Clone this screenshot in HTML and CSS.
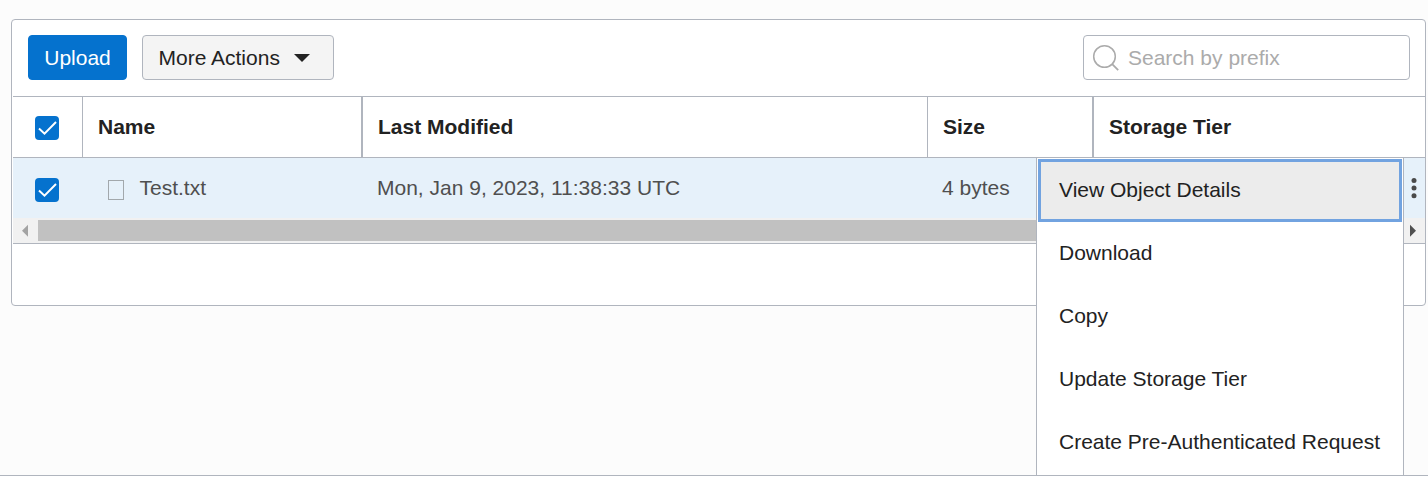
FILE: index.html
```html
<!DOCTYPE html>
<html lang="en">
<head>
<meta charset="utf-8">
<title>Objects</title>
<link rel="stylesheet" href="styles.css">
</head>
<body>
<main class="page">
  <section class="panel">
    <div class="toolbar">
      <button class="btn btn-primary">Upload</button>
      <button class="btn btn-menu">More Actions
        <svg class="caret" width="16" height="8" viewBox="0 0 16 8"><path d="M0 0h16L8 8z" fill="#222"/></svg>
      </button>
      <label class="search">
        <svg width="28" height="28" viewBox="0 0 28 28" fill="none" stroke="#ababab" stroke-width="1.5"><circle cx="12.5" cy="12.5" r="10.8"/><path d="M20.2 20.2l6 6" stroke-width="1.8"/></svg>
        <span>Search by prefix</span>
      </label>
    </div>
    <div class="table">
      <div class="row head">
        <div class="cell check"><svg class="box" viewBox="0 0 24 24"><rect width="24" height="24" rx="4" fill="#0572ce"/><path d="M4 12.5l5.5 5.2L21 6" fill="none" stroke="#fff" stroke-width="2"/></svg></div>
        <div class="cell name">Name</div>
        <div class="cell modified">Last Modified</div>
        <div class="cell size">Size</div>
        <div class="cell tier">Storage Tier</div>
      </div>
      <div class="row item">
        <div class="cell check"><svg class="box" viewBox="0 0 24 24"><rect width="24" height="24" rx="4" fill="#0572ce"/><path d="M4 12.5l5.5 5.2L21 6" fill="none" stroke="#fff" stroke-width="2"/></svg></div>
        <div class="cell name"><i class="file"></i>Test.txt</div>
        <div class="cell modified">Mon, Jan 9, 2023, 11:38:33 UTC</div>
        <div class="cell size">4 bytes</div>
        <div class="cell tier"></div>
        <svg class="kebab" width="14" height="60" viewBox="0 0 14 60" fill="#4a4a4a"><circle cx="3" cy="22.4" r="2.5"/><circle cx="3" cy="30" r="2.5"/><circle cx="3" cy="37.7" r="2.5"/></svg>
      </div>
      <div class="scrollbar">
        <svg class="arrow" width="25" height="25" viewBox="0 0 25 25"><path d="M15 6.8v12L9 12.8z" fill="#a3a3a3"/></svg>
        <div class="thumb"></div>
        <svg class="arrow" width="25" height="25" viewBox="0 0 25 25"><path d="M10 6.8v12l6-6z" fill="#505050"/></svg>
      </div>
    </div>
  </section>
  <nav class="menu">
    <a class="option active">View Object Details</a>
    <a class="option">Download</a>
    <a class="option">Copy</a>
    <a class="option">Update Storage Tier</a>
    <a class="option">Create Pre-Authenticated Request</a>
  </nav>
</main>
</body>
</html>
```
FILE: styles.css
```css
* { box-sizing: border-box; }
body {
  margin: 0;
  background: #fff;
  color: #222;
  font: 21px/24px "Liberation Sans", Arial, sans-serif;
  overflow: hidden;
}
.page {
  position: relative;
  height: 476px;
  padding: 19px 2px 0 11px;
  background: #fcfcfc;
  border-bottom: 1px solid #b0b5be;
}
.panel {
  height: 287px;
  background: #fff;
  border: 1px solid #b0b5be;
  border-radius: 4px;
}
.toolbar {
  display: flex;
  gap: 15px;
  height: 76px;
  padding: 15px 15px 0 16px;
}
.btn {
  display: flex;
  align-items: center;
  height: 45px;
  border: 1px solid #b0b5be;
  border-radius: 4px;
  font: inherit;
  color: #222;
  white-space: nowrap;
}
.btn-primary {
  width: 99px;
  justify-content: center;
  padding: 0;
  background: #0572ce;
  border-color: #0572ce;
  color: #fff;
}
.btn-menu {
  width: 192px;
  padding: 0 0 0 15.5px;
  background: #f4f4f4;
}
.caret { margin-left: 14.5px; }
.search {
  display: flex;
  align-items: center;
  width: 327px;
  height: 45px;
  margin-left: auto;
  padding-left: 8px;
  gap: 8px;
  border: 1px solid #b0b5be;
  border-radius: 4px;
  color: #ababab;
}
.table {
  margin-left: 1px;
  border-top: 1px solid #b0b5be;
  border-bottom: 1px solid #b0b5be;
}
.row { display: flex; }
.cell {
  display: flex;
  align-items: center;
  white-space: nowrap;
}
.check { width: 70px; padding-left: 22px; }
.box { width: 24px; height: 24px; margin-top: 2px; }
.name { width: 280px; padding-left: 15px; }
.modified { width: 565px; padding-left: 15px; }
.size { width: 166px; padding-left: 15px; }
.tier { flex: 1; padding-left: 15px; }
.head {
  height: 61px;
  border-bottom: 1px solid #b0b5be;
  font-weight: bold;
}
.head .check, .head .modified { border-right: 1px solid #b0b5be; }
.head .name, .head .size { border-right: 2px solid #b0b5be; }
.item {
  height: 60px;
  background: #e6f1fa;
  color: #4f4f4f;
}
.item .box { margin-top: 4px; }
.item .modified, .item .size { padding-left: 14px; }
.file {
  width: 16px;
  height: 20px;
  margin: 3px 15.5px 0 10px;
  border: 1px solid #a2a8ac;
}
.scrollbar {
  display: flex;
  align-items: center;
  height: 25px;
  background: #f1f1f1;
}
.thumb { flex: 1; height: 21px; background: #c1c1c1; }
.menu {
  position: absolute;
  top: 158px;
  left: 1036px;
  width: 368px;
  height: 317px;
  padding: 1px 1px 0;
  background: #fff;
  border: solid #b0b5be;
  border-width: 0 1px;
}
.option {
  display: flex;
  align-items: center;
  height: 63px;
  padding: 0 0 2px 21px;
  white-space: nowrap;
}
.active {
  padding-left: 18px;
  background: #ececec;
  border: 3px solid #72a3e0;
}
```
